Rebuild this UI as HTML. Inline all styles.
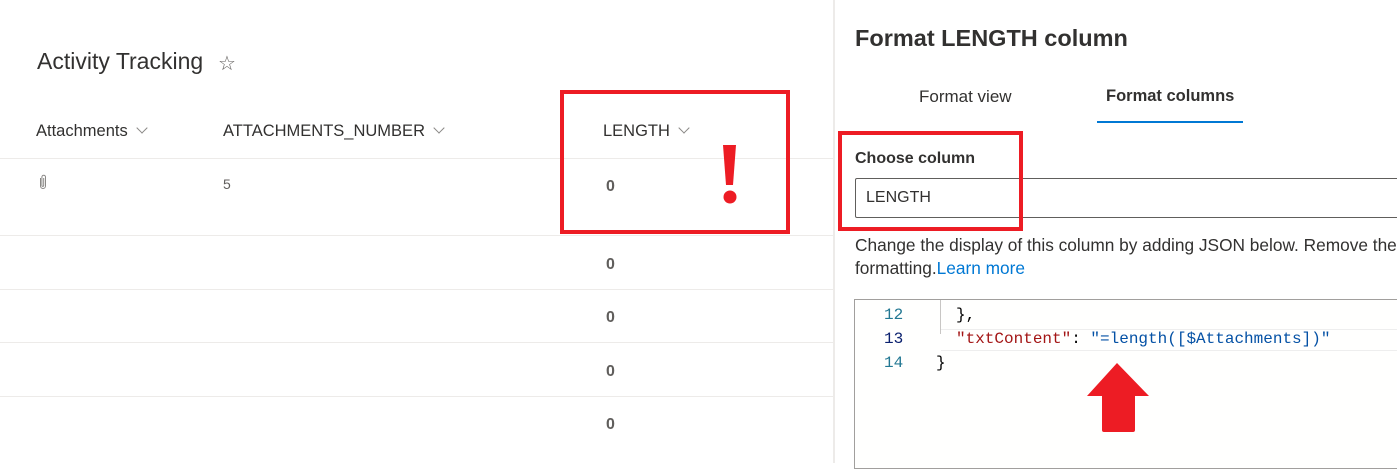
<!DOCTYPE html>
<html><head><meta charset="utf-8"><style>
*{margin:0;padding:0;box-sizing:border-box}
body{width:1397px;height:463px;overflow:hidden;background:#fff;font-family:"Segoe UI","Liberation Sans",sans-serif;position:relative;color:#323130}
.a{position:absolute;white-space:nowrap}
.hl{position:absolute;left:0;width:833px;height:1px;background:#edebe9}
.z{position:absolute;left:606px;font-size:16px;font-weight:bold;color:#605e5c}
.chev{display:inline-block;width:8px;height:8px;border-right:1px solid #8a8886;border-bottom:1px solid #8a8886;transform:rotate(45deg);margin-left:10px;position:relative;top:-4px}
.m{font-family:'Liberation Mono',monospace;font-size:16px}
</style></head><body>
<div class="a" style="left:37px;top:48px;font-size:23px;color:#323130">Activity Tracking</div>
<div class="a" style="left:218px;top:51px;font-size:20px;color:#605e5c">☆</div>
<div class="a" style="left:36px;top:122px;font-size:16.5px;color:#323130">Attachments<span class="chev"></span></div>
<div class="a" style="left:223px;top:122px;font-size:16.5px;color:#323130">ATTACHMENTS_NUMBER<span class="chev"></span></div>
<div class="a" style="left:603px;top:122px;font-size:16.5px;color:#323130">LENGTH<span class="chev"></span></div>
<div class="hl" style="top:158px"></div>
<div class="hl" style="top:235px"></div>
<div class="hl" style="top:289px"></div>
<div class="hl" style="top:342px"></div>
<div class="hl" style="top:396px"></div>
<svg class="a" style="left:38px;top:174px" width="10" height="16" viewBox="0 0 10 16"><path d="M2.5 4v8a2.5 2.5 0 0 0 5 0V3a1.8 1.8 0 0 0-3.6 0v8.5a.9.9 0 0 0 1.8 0V4" fill="none" stroke="#8a8886" stroke-width="1"/></svg>
<div class="a" style="left:223px;top:176px;font-size:14px;color:#605e5c">5</div>
<div class="z" style="top:178px">0</div>
<div class="z" style="top:256px">0</div>
<div class="z" style="top:309px">0</div>
<div class="z" style="top:363px">0</div>
<div class="z" style="top:416px">0</div>
<div class="a" style="left:560px;top:90px;width:230px;height:144px;border:4px solid #ed1c24"></div>
<svg class="a" style="left:718px;top:143px" width="26" height="62"><path d="M5 2h13l-3 40h-7z" fill="#ed1c24"/><circle cx="12" cy="54" r="6.5" fill="#ed1c24"/></svg>
<div class="a" style="left:833px;top:0;width:2px;height:463px;background:#edebe9"></div>
<div class="a" style="left:855px;top:25px;font-size:23.5px;font-weight:600;color:#323130">Format LENGTH column</div>
<div class="a" style="left:919px;top:87px;font-size:17px;color:#323130">Format view</div>
<div class="a" style="left:1106px;top:87px;font-size:16.5px;font-weight:600;color:#323130">Format columns</div>
<div class="a" style="left:1097px;top:121px;width:146px;height:2px;background:#0078d4"></div>
<div class="a" style="left:855px;top:150px;font-size:16px;font-weight:600;color:#323130">Choose column</div>
<div class="a" style="left:855px;top:178px;width:560px;height:40px;border:1px solid #605e5c;border-radius:2px"></div>
<div class="a" style="left:866px;top:189px;font-size:16px;color:#323130">LENGTH</div>
<div class="a" style="left:838px;top:131px;width:185px;height:100px;border:4px solid #ed1c24"></div>
<div class="a" style="left:855px;top:235px;font-size:17.3px;color:#323130">Change the display of this column by adding JSON below. Remove the</div>
<div class="a" style="left:855px;top:258px;font-size:17.3px;color:#323130">formatting.<span style="color:#0078d4">Learn more</span></div>
<div class="a" style="left:854px;top:299px;width:560px;height:170px;border:1px solid #a19f9d;background:#fffffe"></div>
<div class="a" style="left:940px;top:300px;width:1px;height:34px;background:#c8c6c4"></div>
<div class="a" style="left:941px;top:329px;width:470px;height:22px;border-top:1px solid #eee;border-bottom:1px solid #eee"></div>
<div class="a m" style="left:884px;top:306px;color:#237893">12</div>
<div class="a m" style="left:884px;top:330px;color:#0b216f">13</div>
<div class="a m" style="left:884px;top:354px;color:#237893">14</div>
<div class="a m" style="left:956px;top:306px;color:#000">},</div>
<div class="a m" style="left:956px;top:330px;color:#000"><span style="color:#a31515">"txtContent"</span>: <span style="color:#0451a5">"=length([$Attachments])"</span></div>
<div class="a m" style="left:936px;top:354px;color:#000">}</div>
<svg class="a" style="left:1085px;top:362px" width="66" height="72"><path d="M32 1L2 34h15v34q0 2 2 2h29q2 0 2-2V34h14z" fill="#ed1c24"/></svg>
</body></html>
